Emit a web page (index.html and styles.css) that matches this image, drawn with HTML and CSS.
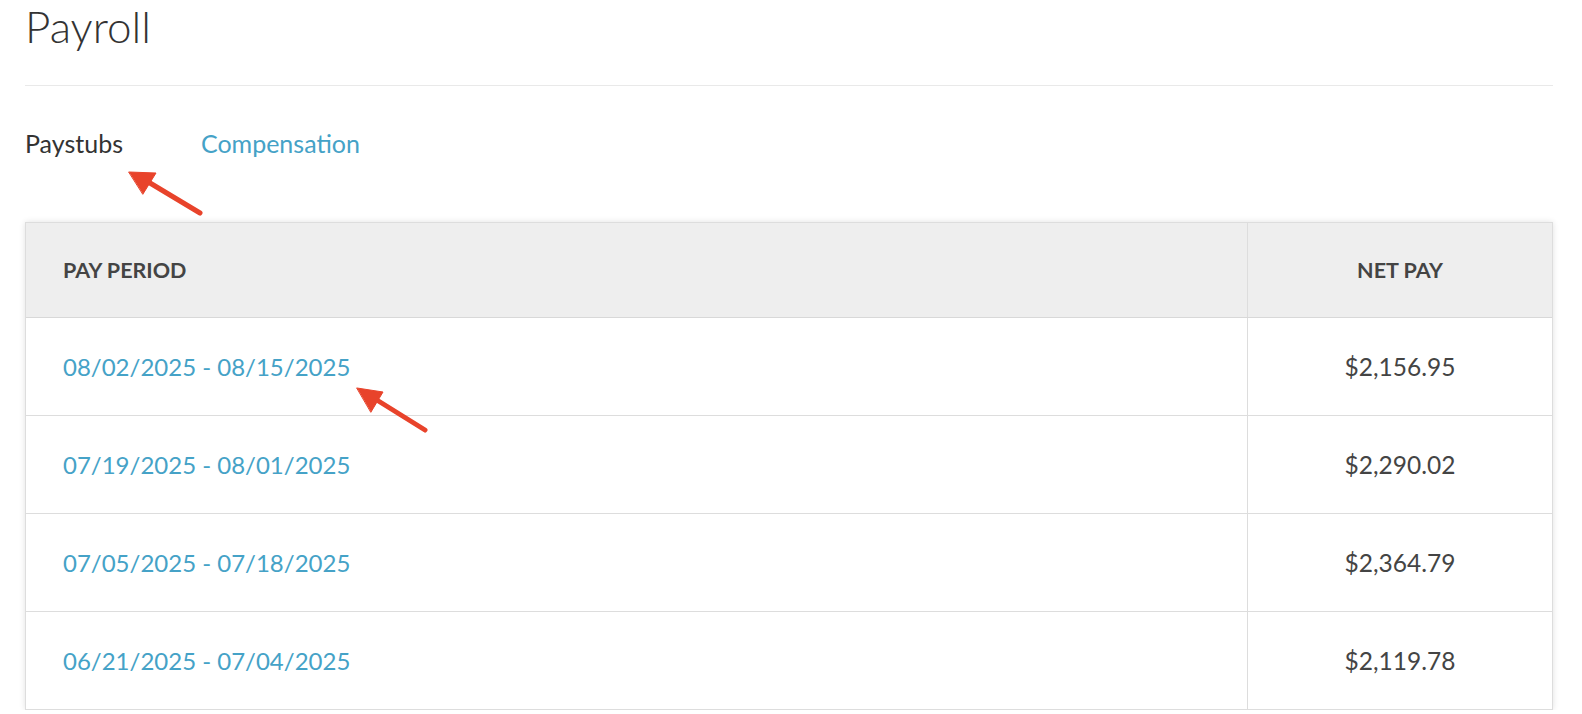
FILE: index.html
```html
<!DOCTYPE html>
<html>
<head>
<meta charset="utf-8">
<link rel="stylesheet" href="styles.css">
</head>
<body>
<div class="page">
  <h1 class="title">Payroll</h1>
  <div class="rule"></div>
  <nav class="tabs">
    <span class="tab active">Paystubs</span>
    <a class="tab link">Compensation</a>
  </nav>
  <div class="table">
    <div class="row head">
      <div class="cell period">PAY PERIOD</div>
      <div class="cell amount">NET PAY</div>
    </div>
    <div class="row">
      <div class="cell period"><a class="link">08/02/2025 - 08/15/2025</a></div>
      <div class="cell amount">$2,156.95</div>
    </div>
    <div class="row">
      <div class="cell period"><a class="link">07/19/2025 - 08/01/2025</a></div>
      <div class="cell amount">$2,290.02</div>
    </div>
    <div class="row">
      <div class="cell period"><a class="link">07/05/2025 - 07/18/2025</a></div>
      <div class="cell amount">$2,364.79</div>
    </div>
    <div class="row">
      <div class="cell period"><a class="link">06/21/2025 - 07/04/2025</a></div>
      <div class="cell amount">$2,119.78</div>
    </div>
  </div>
</div>
<svg class="annot" width="1582" height="714" viewBox="0 0 1582 714">
  <g fill="#e8432b" stroke="#e8432b" stroke-linecap="round" stroke-linejoin="round">
    <line x1="200" y1="213" x2="145" y2="180" stroke-width="5"/>
    <polygon points="129,172 156,173 143,194" stroke-width="1"/>
    <line x1="425" y1="430" x2="372" y2="397" stroke-width="5"/>
    <polygon points="357,388 383,392 371,412" stroke-width="1"/>
  </g>
</svg>
</body>
</html>
```
FILE: styles.css
```css
html, body {
  margin: 0;
  padding: 0;
  background: #ffffff;
  font-family: Lato, "Open Sans", sans-serif;
  color: #444444;
}
.page {
  width: 1528px;
  padding-left: 25px;
}
.title {
  margin: 0;
  font-weight: 300;
  font-size: 44px;
  line-height: 52px;
  height: 52px;
  color: #333333;
}
.rule {
  height: 1px;
  background: #e9e9e9;
  margin-top: 33px;
}
.tabs {
  display: flex;
  gap: 78px;
  margin-top: 42px;
  font-size: 25px;
  line-height: 30px;
  height: 30px;
}
.tab { color: #333333; }
.link {
  color: #45a2c7;
  text-decoration: none;
}
.table {
  margin-top: 64px;
  border: 1px solid #dddddd;
  box-shadow: 0 0 6px rgba(0,0,0,0.12);
}
.row {
  display: flex;
  height: 97px;
  border-top: 1px solid #dddddd;
  font-size: 24px;
}
.row.head {
  border-top: none;
  height: 94px;
  background: #eeeeee;
  border-bottom: 1px solid #d8d8d8;
  font-weight: 700;
  font-size: 21.5px;
  color: #444444;
}
.row.head + .row { border-top: none; }
.cell {
  display: flex;
  align-items: center;
}
.period {
  flex: 1;
  padding-left: 37px;
}
.amount {
  width: 304px;
  border-left: 1px solid #dddddd;
  justify-content: center;
  font-size: 24.5px;
}
.row.head .amount { font-size: 21.5px; }
.annot {
  position: absolute;
  left: 0;
  top: 0;
  pointer-events: none;
}
```
